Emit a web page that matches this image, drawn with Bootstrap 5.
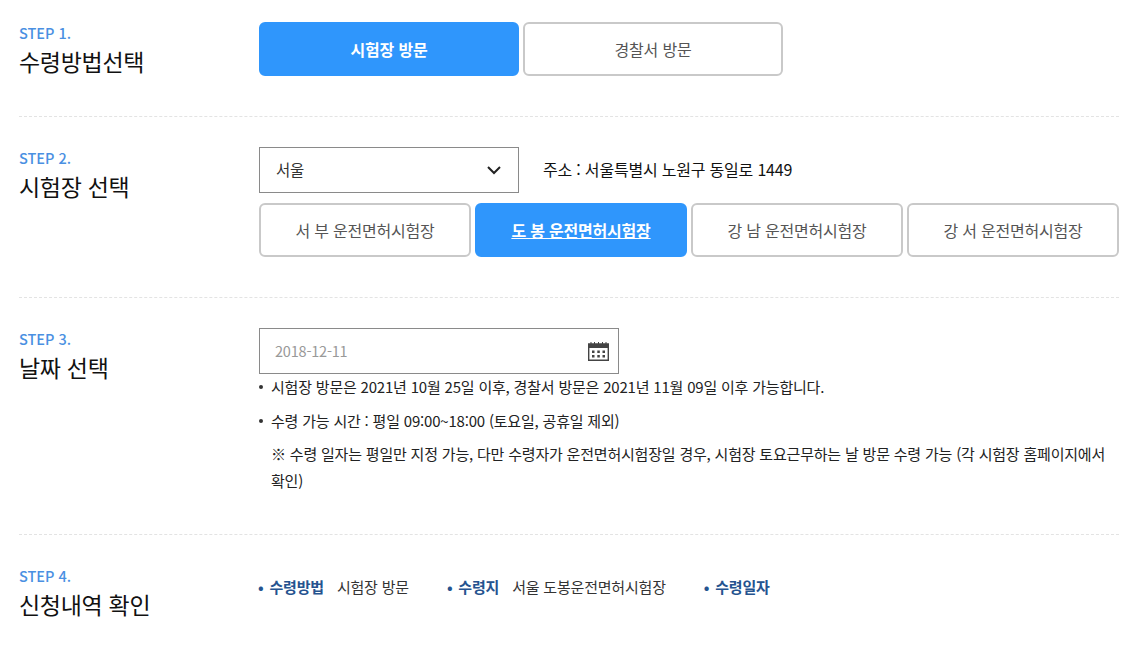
<!DOCTYPE html>
<html lang="ko">
<head>
<meta charset="utf-8">
<title>수령방법선택</title>
<link rel="stylesheet" href="https://cdn.jsdelivr.net/npm/bootstrap@5.3.0/dist/css/bootstrap.min.css">
<style>
html,body{height:651px;overflow:hidden}
body{font-family:"Noto Sans CJK KR","Noto Sans",sans-serif;color:#111;background:#fff;font-size:15px;letter-spacing:-.2px}
.page-wrap{padding:0 14px 0 19px;width:1133px}
.step-row{border-bottom:1px dashed #e3e3e3}
.step-one{height:117px;padding-top:22px}
.step-two{height:181px;padding-top:30px}
.step-three{height:237px;padding-top:30px}
.step-four{padding-top:30px;border-bottom:0}
.step-left{width:240px;flex:none}
.step-no{color:#4a90e2;font-size:14.5px;line-height:20px;font-weight:500;margin-top:1px;letter-spacing:0}
.step-ttl{font-size:23px;line-height:36px;font-weight:400;margin:0;color:#111;letter-spacing:-.3px}
.choice{height:54px;border:2px solid #c9c9c9;border-radius:6px;background:#fff;color:#555;font-size:16px;display:flex;align-items:center;justify-content:center;text-decoration:none}
.choice.on{background:#2f96fc;border-color:#2f96fc;color:#fff;font-weight:700}
.w-wide{width:260px}
.w-mid{width:212px}
.on-u{text-decoration:underline}
.stores{margin-top:10px}
.sel-box{width:260px;height:46px;border:1px solid #8a8a8a;padding:0 16px;display:flex;align-items:center;justify-content:space-between;font-size:15.5px;color:#333}
.addr{font-size:16px;color:#111;margin-left:24px;line-height:24px;padding-bottom:2px}
.date-box{width:360px;height:46px;border:1px solid #8a8a8a;padding:0 9px 0 15px;display:flex;align-items:center;justify-content:space-between;color:#999;font-size:14.5px}
.note-list{list-style:none;padding:0;margin:-1px 0 0;font-size:15px;line-height:27px;color:#222}
.note-list li{padding-left:12px;position:relative;margin-bottom:6.5px}
.note-list li.dot::before{content:"";position:absolute;left:0;top:12px;width:4px;height:4px;border-radius:50%;background:#333}
.sum-row{margin-top:12px;margin-left:-1px}
.sum-item{font-size:15px;color:#333;line-height:20px}
.sum-item b{color:#25538f;font-weight:700;margin-right:13px;word-spacing:2px}
.gap-second{margin-left:38px}
.gap-third{margin-left:38px}
</style>
</head>
<body>
<div class="page-wrap">
  <div class="step-row step-one d-flex">
    <div class="step-left">
      <div class="step-no">STEP 1.</div>
      <h2 class="step-ttl">수령방법선택</h2>
    </div>
    <div class="d-flex gap-1">
      <a class="choice on w-wide" href="#">시험장 방문</a>
      <a class="choice w-wide" href="#">경찰서 방문</a>
    </div>
  </div>
  <div class="step-row step-two d-flex">
    <div class="step-left">
      <div class="step-no">STEP 2.</div>
      <h2 class="step-ttl">시험장 선택</h2>
    </div>
    <div class="flex-grow-1">
      <div class="d-flex align-items-center">
        <div class="sel-box">서울
          <svg width="16" height="10" viewBox="0 0 16 10"><path d="M2 2l6 6 6-6" fill="none" stroke="#222" stroke-width="2"/></svg>
        </div>
        <div class="addr">주소 : 서울특별시 노원구 동일로 1449</div>
      </div>
      <div class="d-flex gap-1 stores">
        <a class="choice w-mid" href="#">서 부 운전면허시험장</a>
        <a class="choice on on-u w-mid" href="#">도 봉 운전면허시험장</a>
        <a class="choice w-mid" href="#">강 남 운전면허시험장</a>
        <a class="choice w-mid" href="#">강 서 운전면허시험장</a>
      </div>
    </div>
  </div>
  <div class="step-row step-three d-flex">
    <div class="step-left">
      <div class="step-no">STEP 3.</div>
      <h2 class="step-ttl">날짜 선택</h2>
    </div>
    <div class="flex-grow-1">
      <div class="date-box">2018-12-11
        <svg width="21" height="19" viewBox="0 0 21 19"><path d="M.7 2h19.600v16.300H.7z" fill="none" stroke="#444" stroke-width="1.400"/><rect x="0" y="2" width="21" height="4" fill="#444"/><path d="M3 0v3M6.500 0v3M10.500 0v3M14.500 0v3M18 0v3" stroke="#444" stroke-width="1"/><path d="M4 8.500h2.500v2.500H4zM9.300 8.500h2.500v2.500H9.300zM14.500 8.500H17v2.500h-2.500zM4 13h2.500v2.500H4zM9.300 13h2.500v2.500H9.300zM14.500 13H17v2.500h-2.500z" fill="#444"/></svg>
      </div>
      <ul class="note-list">
        <li class="dot">시험장 방문은 2021년 10월 25일 이후, 경찰서 방문은 2021년 11월 09일 이후 가능합니다.</li>
        <li class="dot">수령 가능 시간 : 평일 09:00~18:00 (토요일, 공휴일 제외)</li>
        <li>※ 수령 일자는 평일만 지정 가능, 다만 수령자가 운전면허시험장일 경우, 시험장 토요근무하는 날 방문 수령 가능 (각 시험장 홈페이지에서 확인)</li>
      </ul>
    </div>
  </div>
  <div class="step-row step-four d-flex">
    <div class="step-left">
      <div class="step-no">STEP 4.</div>
      <h2 class="step-ttl">신청내역 확인</h2>
    </div>
    <div class="d-flex sum-row align-items-start">
      <div class="sum-item"><b>• 수령방법</b>시험장 방문</div>
      <div class="sum-item gap-second"><b>• 수령지</b>서울 도봉운전면허시험장</div>
      <div class="sum-item gap-third"><b>• 수령일자</b></div>
    </div>
  </div>
</div>
<script src="https://cdn.jsdelivr.net/npm/bootstrap@5.3.0/dist/js/bootstrap.bundle.min.js"></script>
</body>
</html>
